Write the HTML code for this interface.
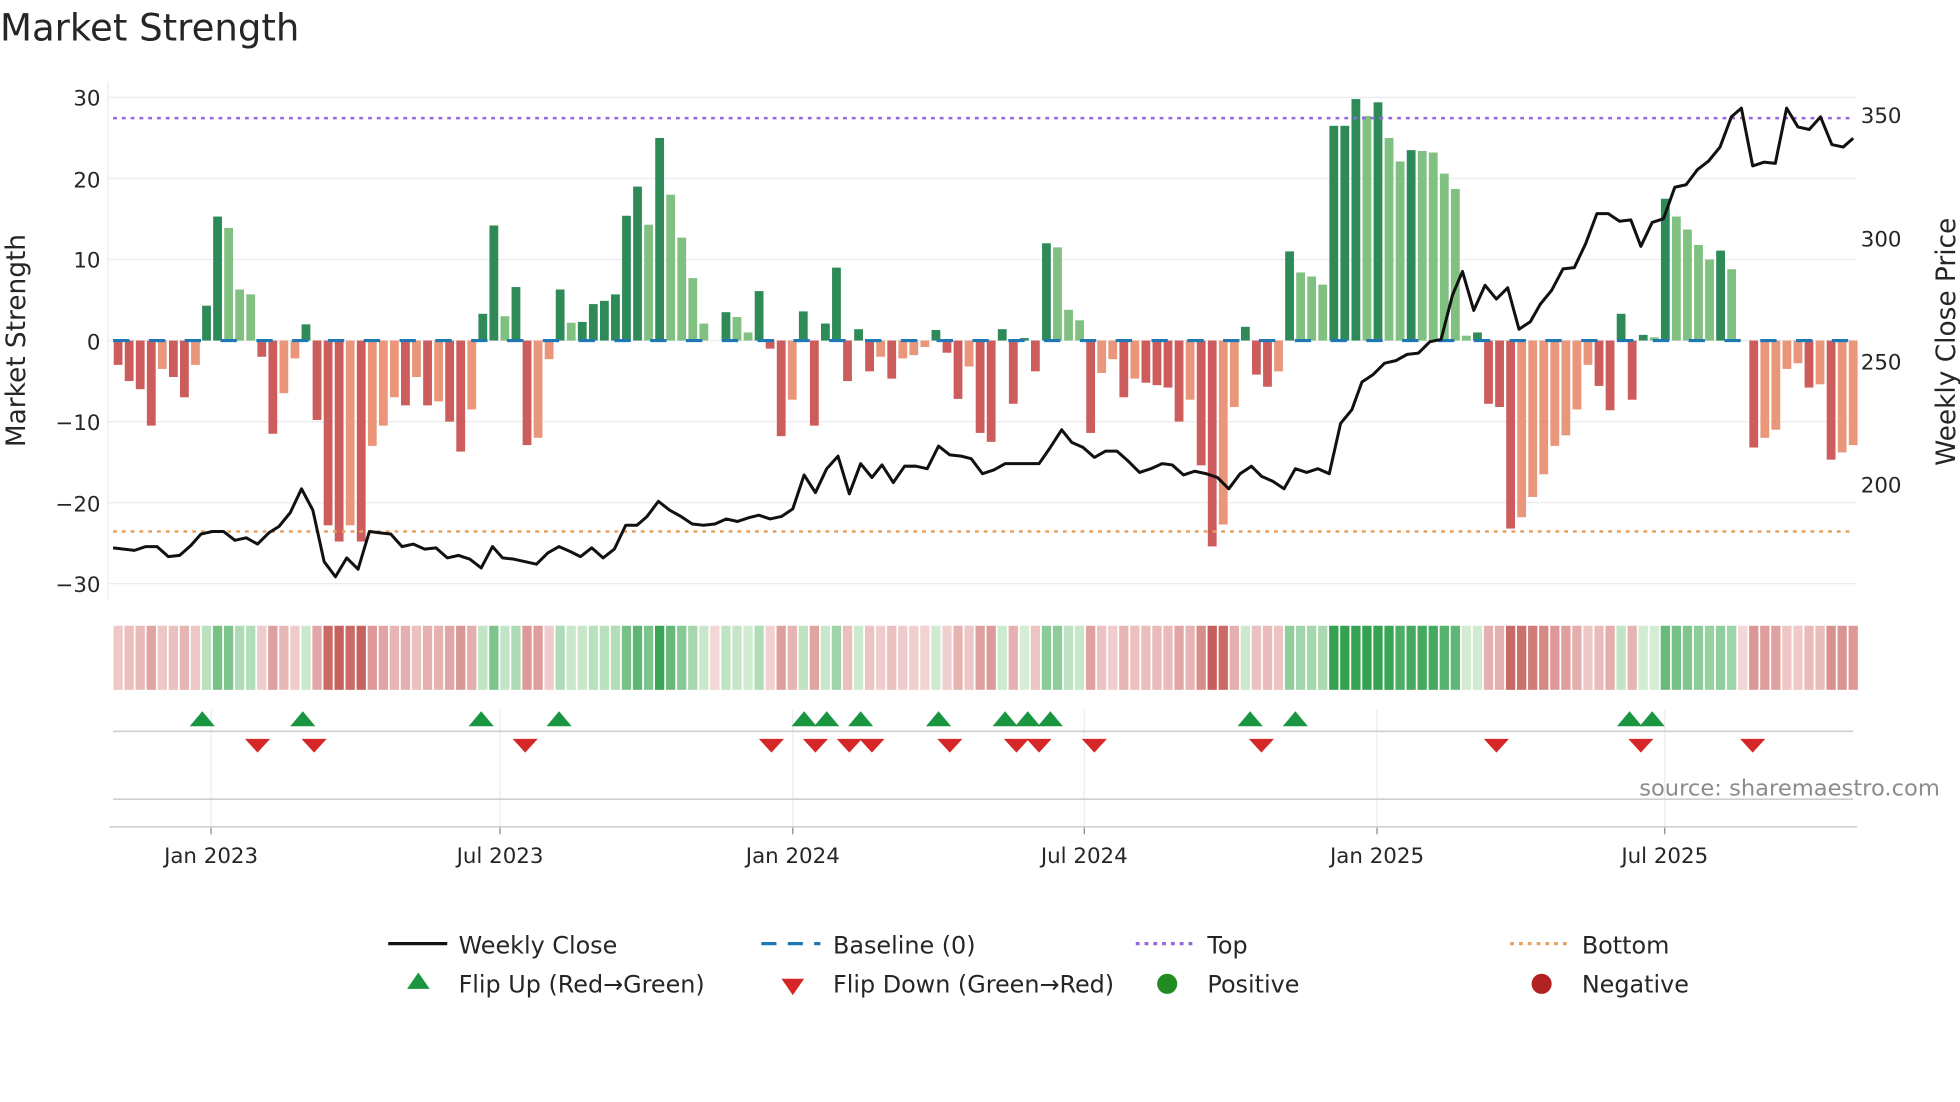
<!DOCTYPE html>
<html><head><meta charset="utf-8">
<style>
html,body{margin:0;padding:0;background:#fff;}
svg{display:block;}
text{font-family:"DejaVu Sans","Liberation Sans",sans-serif;fill:#262626;}
</style></head>
<body>
<svg id="s" width="1960" height="1102" viewBox="0 0 1560 877" xmlns="http://www.w3.org/2000/svg">
<text x="0" y="32" font-size="29.5">Market Strength</text>
<g id="grid"></g>
<g id="bars"></g>
<g id="lines"></g>
<g id="strip"></g>
<g id="marks"></g>
<g font-size="17" text-anchor="end">
<text x="80" y="84">30</text><text x="80" y="149">20</text><text x="80" y="213">10</text>
<text x="80" y="278">0</text><text x="80" y="342">−10</text><text x="80" y="407">−20</text><text x="80" y="471">−30</text>
</g>
<g font-size="17">
<text x="1481" y="98">350</text><text x="1481" y="196">300</text><text x="1481" y="294">250</text><text x="1481" y="392">200</text>
</g>
<text font-size="21" transform="translate(20,271) rotate(-90)" text-anchor="middle">Market Strength</text>
<text font-size="21" transform="translate(1556,272) rotate(-90)" text-anchor="middle">Weekly Close Price</text>
<g font-size="17" text-anchor="middle">
<text x="168" y="687">Jan 2023</text><text x="398" y="687">Jul 2023</text><text x="631" y="687">Jan 2024</text>
<text x="863" y="687">Jul 2024</text><text x="1096" y="687">Jan 2025</text><text x="1325" y="687">Jul 2025</text>
</g>
<text x="1544" y="633" font-size="18" text-anchor="end" style="fill:#8c8c8c">source: sharemaestro.com</text>
<g font-size="19">
<line x1="309" y1="751" x2="356" y2="751" stroke="#111" stroke-width="2.5"/>
<text x="365" y="759">Weekly Close</text>
<line x1="606" y1="751" x2="653" y2="751" stroke="#1f77b4" stroke-width="2.5" stroke-dasharray="12,9"/>
<text x="663" y="759">Baseline (0)</text>
<line x1="904" y1="751" x2="950" y2="751" stroke="#9467dd" stroke-width="2.5" stroke-dasharray="3,4"/>
<text x="961" y="759">Top</text>
<line x1="1202" y1="751" x2="1248" y2="751" stroke="#e8a060" stroke-width="2.5" stroke-dasharray="3,4"/>
<text x="1259" y="759">Bottom</text>
<polygon points="333,774 342,787 324,787" fill="#1a9641"/>
<text x="365" y="790">Flip Up (Red→Green)</text>
<polygon points="622,779 640,779 631,792" fill="#d62728"/>
<text x="663" y="790">Flip Down (Green→Red)</text>
<circle cx="929" cy="783" r="8" fill="#228b22"/>
<text x="961" y="790">Positive</text>
<circle cx="1227" cy="783" r="8" fill="#b22222"/>
<text x="1259" y="790">Negative</text>
</g>
</svg>
<script>
var NS="http://www.w3.org/2000/svg";
function el(p,t,a){var e=document.createElementNS(NS,t);for(var k in a)e.setAttribute(k,a[k]);document.getElementById(p).appendChild(e);return e;}
var v=[-3,-5,-6,-10.5,-3.5,-4.5,-7,-3,4.3,15.3,13.9,6.3,5.7,-2,-11.5,-6.5,-2.2,2,-9.8,-22.8,-24.8,-22.8,-24.8,-13,-10.5,-7,-8,-4.5,-8,-7.5,-10,-13.7,-8.5,3.3,14.2,3,6.6,-12.9,-12,-2.3,6.3,2.2,2.3,4.5,4.9,5.7,15.4,19,14.3,25,18,12.7,7.7,2.1,0,3.5,2.9,1,6.1,-1,-11.8,-7.3,3.6,-10.5,2.1,9,-5,1.4,-3.8,-2,-4.7,-2.2,-1.8,-0.8,1.3,-1.5,-7.2,-3.2,-11.4,-12.5,1.4,-7.8,0.3,-3.8,12,11.5,3.8,2.5,-11.4,-4,-2.3,-7,-4.7,-5.2,-5.5,-5.8,-10,-7.3,-15.4,-25.4,-22.7,-8.2,1.7,-4.2,-5.7,-3.8,11,8.4,7.9,6.9,26.5,26.5,29.8,27.7,29.4,25,22.1,23.5,23.4,23.2,20.6,18.7,0.6,1,-7.8,-8.2,-23.2,-21.8,-19.3,-16.5,-13,-11.7,-8.5,-3,-5.6,-8.6,3.3,-7.3,0.7,0.4,17.5,15.3,13.7,11.8,10,11.1,8.8,0,-13.2,-12,-11,-3.5,-2.8,-5.8,-5.4,-14.7,-13.8,-12.9];
var n=v.length,x0=94,step=(1475-94)/(n-1),Y0=271,k=6.45;
[30,20,10,0,-10,-20,-30].forEach(function(t){var y=Y0-t*k;el("grid","line",{x1:86,x2:1478,y1:y,y2:y,stroke:"#ececf0","stroke-width":1});});
el("grid","line",{x1:86,x2:86,y1:65,y2:478,stroke:"#ececf0"});
[168,398,631,863,1096,1325].forEach(function(x){el("grid","line",{x1:x,x2:x,y1:565,y2:658,stroke:"#ececf0"});el("grid","line",{x1:x,x2:x,y1:658,y2:664,stroke:"#888"});});
el("grid","line",{x1:90,x2:1475,y1:582,y2:582,stroke:"#cfcfcf","stroke-width":1.3});
el("grid","line",{x1:90,x2:1475,y1:636,y2:636,stroke:"#cfcfcf","stroke-width":1.3});
el("grid","line",{x1:87,x2:1478,y1:658,y2:658,stroke:"#cfcfcf","stroke-width":1.3});
function lerp(a,b,t){return "rgb("+[0,1,2].map(function(i){return Math.round(a[i]+(b[i]-a[i])*t)}).join(",")+")";}
for(var i=0;i<n;i++){
 var x=x0+i*step,val=v[i],p=i?v[i-1]:0;
 if(val!==0){
  var dark=(Math.abs(val)>=Math.abs(p))||(val*p<0);
  var c=val>0?(dark?"#2e8b57":"#80c080"):(dark?"#cd5c5c":"#e9967a");
  var y=val>0?Y0-val*k:Y0, h=Math.abs(val)*k;
  el("bars","rect",{x:x-3.5,y:y,width:7,height:h,fill:c});
 }
 var t=Math.min(Math.abs(val)/26,1);
 var sc=val>0?lerp([214,238,214],[52,162,80],t):lerp([243,214,214],[196,92,88],t);
 el("strip","rect",{x:x-3.7,y:498,width:7.4,height:51,fill:sc});
}
el("lines","line",{x1:90,x2:1475,y1:Y0,y2:Y0,stroke:"#1f77b4","stroke-width":2.5,"stroke-dasharray":"13,15.5"});
el("lines","line",{x1:90,x2:1475,y1:94,y2:94,stroke:"#9467dd","stroke-width":2,"stroke-dasharray":"3,4"});
el("lines","line",{x1:90,x2:1475,y1:423,y2:423,stroke:"#e8a060","stroke-width":2,"stroke-dasharray":"3,4"});
var pts="90,436 107,438 116,435 125,435 134,443 143,442 152,434 160,425 169,423 178,423 187,430 196,428 205,433 214,424 222,419 231,408 240,389 249,406 258,447 267,459 276,444 285,453 294,423 302,424 311,425 320,435 329,433 338,437 347,436 356,444 365,442 374,445 383,452 392,435 400,444 409,445 427,449 436,440 445,435 454,439 462,443 471,436 480,444 489,437 498,418 507,418 515,411 524,399 533,406 542,411 551,417 560,418 569,417 578,413 587,415 596,412 604,410 613,413 622,411 631,405 640,378 649,392 658,373 667,363 676,393 685,369 694,380 702,370 711,384 720,371 729,371 738,373 747,355 756,362 765,363 773,365 782,377 791,374 800,369 809,369 818,369 827,369 836,356 845,342 853,352 862,356 871,364 880,359 889,359 898,367 907,376 916,373 925,369 933,370 942,378 951,375 960,377 969,380 978,389 987,377 996,371 1004,379 1013,383 1022,389 1031,373 1040,376 1049,373 1058,377 1067,337 1076,326 1084,304 1093,298 1102,289 1111,287 1120,282 1129,281 1138,272 1147,270 1156,235 1164,216 1173,247 1182,227 1191,238 1200,229 1209,262 1218,256 1226,242 1235,231 1244,214 1253,213 1262,194 1271,170 1280,170 1289,176 1298,175 1306,196 1315,177 1324,174 1333,149 1342,147 1351,135 1360,128 1369,117 1378,93 1386,86 1395,132 1404,129 1413,130 1422,86 1431,101 1440,103 1449,93 1458,115 1467,117 1475,110";
el("lines","polyline",{points:pts,fill:"none",stroke:"#111","stroke-width":2.4,"stroke-linejoin":"round"});
[161,241,383,445,640,658,685,747,800,818,836,995,1031,1297,1315].forEach(function(x){el("marks","polygon",{points:(x)+",566 "+(x+10)+",578 "+(x-10)+",578",fill:"#1a9641"});});
[205,250,418,614,649,676,694,756,809,827,871,1004,1191,1306,1395].forEach(function(x){el("marks","polygon",{points:(x-10)+",588 "+(x+10)+",588 "+x+",599",fill:"#d62728"});});
</script>
</body></html>
